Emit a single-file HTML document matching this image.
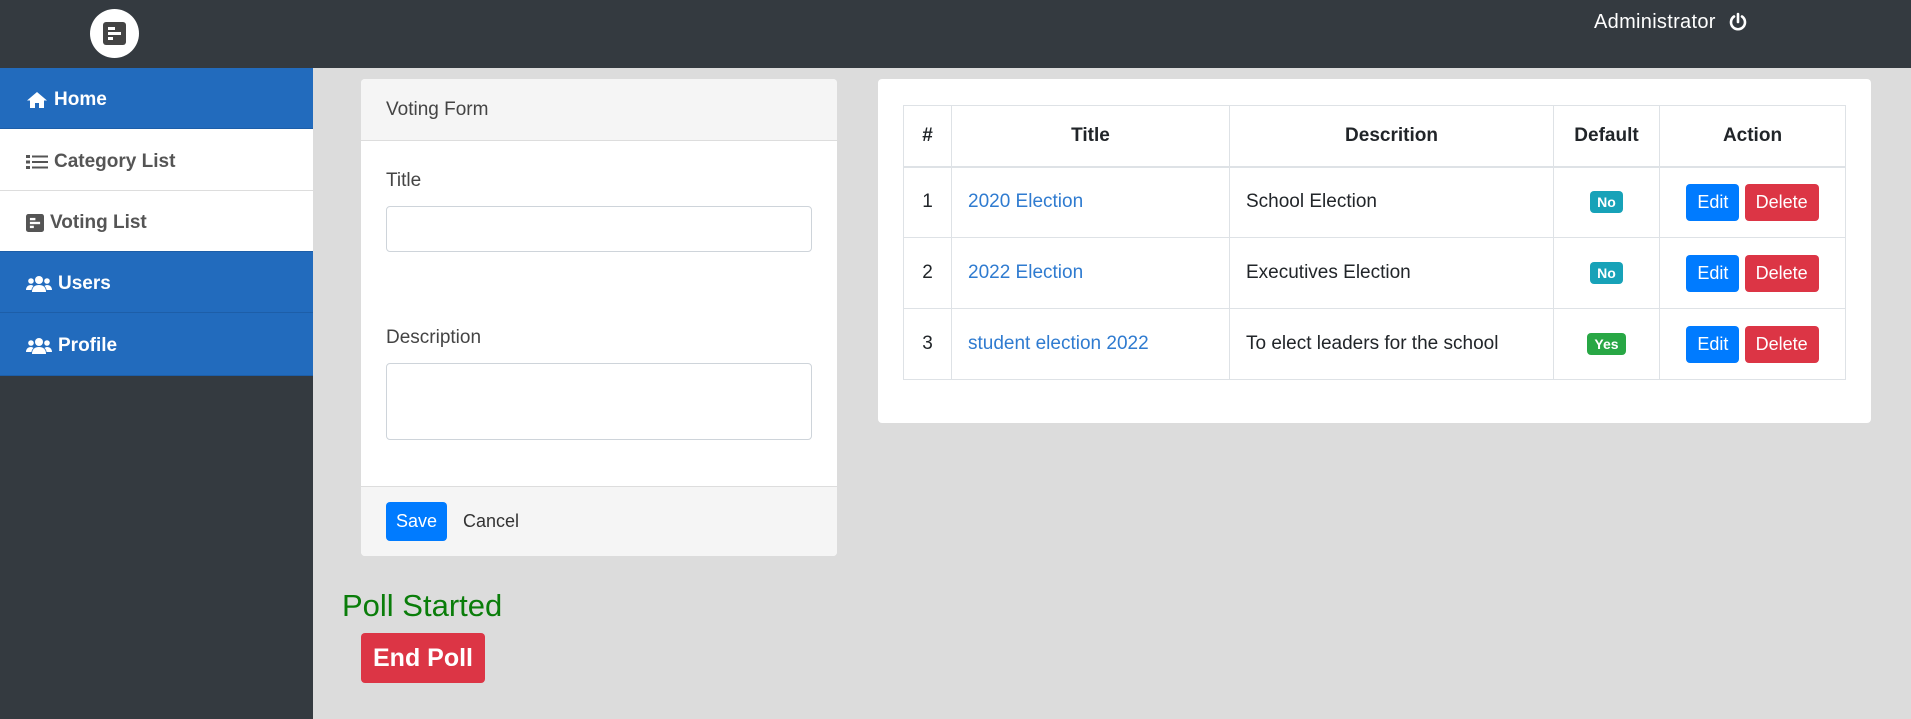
<!DOCTYPE html>
<html><head><meta charset="utf-8"><style>
*{box-sizing:border-box;margin:0;padding:0}
body{width:1911px;height:719px;overflow:hidden;background:#dcdcdc;font-family:"Liberation Sans",sans-serif;color:#212529;position:relative}
.a{position:absolute}
#hdr{left:0;top:0;width:1911px;height:68px;background:#343a40}
#side{left:0;top:68px;width:313px;height:651px;background:#343a40}
.nav{position:absolute;left:0;width:313px;height:61px;font-size:19px;font-weight:bold;display:flex;align-items:center;padding-left:26px;padding-top:4px;gap:6px}
.blue{background:#226bbd;color:#fff;border-bottom:1px solid #1d5ea8}
.white{background:#fff;color:#555;border-bottom:1px solid #ddd}
.card{background:#fff;border-radius:4px}
input.f{position:absolute;border:1px solid #ced4da;border-radius:4px;background:#fff}
table{border-collapse:collapse;position:absolute;left:903px;top:105px;width:943px;font-size:19px}
td,th{border:1px solid #dee2e6;padding:0 16px}
th{height:61px;border-bottom:2px solid #dee2e6}
td{height:71px}
a{color:#2f7bd0;text-decoration:none}
.bd{display:inline-block;color:#fff;font-weight:bold;font-size:14px;padding:3px 7px;border-radius:4px}
.btn{display:inline-block;color:#fff;font-size:18px;padding:8px 11px;border-radius:4px;vertical-align:middle}
</style></head><body>
<div id="hdr" class="a"></div>
<div class="a" style="left:90px;top:9px;width:49px;height:49px;border-radius:50%;background:#fff"></div>
<svg class="a" style="left:103px;top:22px" width="23" height="23" viewBox="0 0 23 23"><rect width="23" height="23" rx="3" fill="#444"/><rect x="5" y="5" width="7" height="3" fill="#fff"/><rect x="5" y="10" width="13" height="3" fill="#fff"/><rect x="5" y="15" width="5" height="3" fill="#fff"/></svg>
<div class="a" style="left:1594px;top:11px;color:#fff;font-size:20px;letter-spacing:0.3px">Administrator</div>
<svg class="a" style="left:1728px;top:12px" width="20" height="20" viewBox="0 0 20 20"><path d="M6 4.5A7 7 0 1 0 14 4.5" fill="none" stroke="#fff" stroke-width="2.6" stroke-linecap="round"/><path d="M10 2v8" stroke="#fff" stroke-width="2.6" stroke-linecap="round"/></svg>
<div id="side" class="a"></div>
<div class="nav blue" style="top:68px"><svg width="22" height="18" viewBox="0 0 22 18"><path d="M11 1L1 9.5h3V17h5v-5h4v5h5V9.5h3z" fill="#fff"/></svg>Home</div>
<div class="nav white" style="top:129px;height:62px"><svg width="22" height="16" viewBox="0 0 22 16"><g fill="#555"><rect y="1" width="4" height="3"/><rect y="6.5" width="4" height="3"/><rect y="12" width="4" height="3"/><rect x="6" y="1.5" width="16" height="2"/><rect x="6" y="7" width="16" height="2"/><rect x="6" y="12.5" width="16" height="2"/></g></svg>Category List</div>
<div class="nav white" style="top:191px;height:61px;border-bottom:1px solid #1d5ea8"><svg width="18" height="18" viewBox="0 0 23 23"><rect width="23" height="23" rx="3" fill="#555"/><rect x="5" y="5" width="7" height="3" fill="#fff"/><rect x="5" y="10" width="13" height="3" fill="#fff"/><rect x="5" y="15" width="5" height="3" fill="#fff"/></svg>Voting List</div>
<div class="nav blue" style="top:252px"><svg width="26" height="18" viewBox="0 0 26 18"><g fill="#fff"><circle cx="13" cy="5" r="4"/><circle cx="5" cy="6" r="2.8"/><circle cx="21" cy="6" r="2.8"/><path d="M6 17c0-5 3-7 7-7s7 2 7 7z"/><path d="M0 15c0-3 2-5 5-5 1 0 2 .5 2.5 1-1.5 1.5-2 3-2 4z"/><path d="M26 15c0-3-2-5-5-5-1 0-2 .5-2.5 1 1.5 1.5 2 3 2 4z"/></g></svg>Users</div>
<div class="nav blue" style="top:313px;height:63px"><svg width="26" height="18" viewBox="0 0 26 18"><g fill="#fff"><circle cx="13" cy="5" r="4"/><circle cx="5" cy="6" r="2.8"/><circle cx="21" cy="6" r="2.8"/><path d="M6 17c0-5 3-7 7-7s7 2 7 7z"/><path d="M0 15c0-3 2-5 5-5 1 0 2 .5 2.5 1-1.5 1.5-2 3-2 4z"/><path d="M26 15c0-3-2-5-5-5-1 0-2 .5-2.5 1 1.5 1.5 2 3 2 4z"/></g></svg>Profile</div>

<div class="a card" style="left:361px;top:79px;width:476px;height:477px;overflow:hidden">
 <div class="a" style="left:0;top:0;width:476px;height:62px;background:#f5f5f5;border-bottom:1px solid #ddd;font-size:19px;color:#444;padding:20px 25px">Voting Form</div>
 <div class="a" style="left:25px;top:91px;font-size:19px;color:#444">Title</div>
 <div class="a" style="left:25px;top:248px;font-size:19px;color:#444">Description</div>
 <div class="a" style="left:0;top:407px;width:476px;height:70px;background:#f5f5f5;border-top:1px solid #ddd"></div>
 <div class="a" style="left:25px;top:423px;width:61px;height:39px;background:#007bff;border-radius:4px;color:#fff;font-size:18px;text-align:center;line-height:39px">Save</div>
 <div class="a" style="left:102px;top:432px;font-size:18px;color:#333">Cancel</div>
</div>
<input class="f" style="left:386px;top:206px;width:426px;height:46px">
<div class="a" style="left:386px;top:363px;width:426px;height:77px;border:1px solid #ced4da;border-radius:4px;background:#fff"></div>

<div class="a" style="left:342px;top:588px;font-size:31px;color:#0a7d0a">Poll Started</div>
<div class="a" style="left:361px;top:633px;width:124px;height:50px;background:#dc3545;border-radius:4px;color:#fff;font-weight:bold;font-size:25px;text-align:center;line-height:50px">End Poll</div>

<div class="a card" style="left:878px;top:79px;width:993px;height:344px"></div>
<table>
<tr><th style="width:48px">#</th><th style="width:278px">Title</th><th style="width:324px">Descrition</th><th style="width:106px;padding:0">Default</th><th>Action</th></tr>
<tr><td style="text-align:center">1</td><td><a>2020 Election</a></td><td>School Election</td><td style="text-align:center;padding:0"><span class="bd" style="background:#17a2b8">No</span></td><td style="text-align:center;padding:0"><span class="btn" style="background:#007bff">Edit</span> <span class="btn" style="background:#dc3545">Delete</span></td></tr>
<tr><td style="text-align:center">2</td><td><a>2022 Election</a></td><td>Executives Election</td><td style="text-align:center;padding:0"><span class="bd" style="background:#17a2b8">No</span></td><td style="text-align:center;padding:0"><span class="btn" style="background:#007bff">Edit</span> <span class="btn" style="background:#dc3545">Delete</span></td></tr>
<tr><td style="text-align:center">3</td><td><a>student election 2022</a></td><td>To elect leaders for the school</td><td style="text-align:center;padding:0"><span class="bd" style="background:#28a745">Yes</span></td><td style="text-align:center;padding:0"><span class="btn" style="background:#007bff">Edit</span> <span class="btn" style="background:#dc3545">Delete</span></td></tr>
</table>
</body></html>
